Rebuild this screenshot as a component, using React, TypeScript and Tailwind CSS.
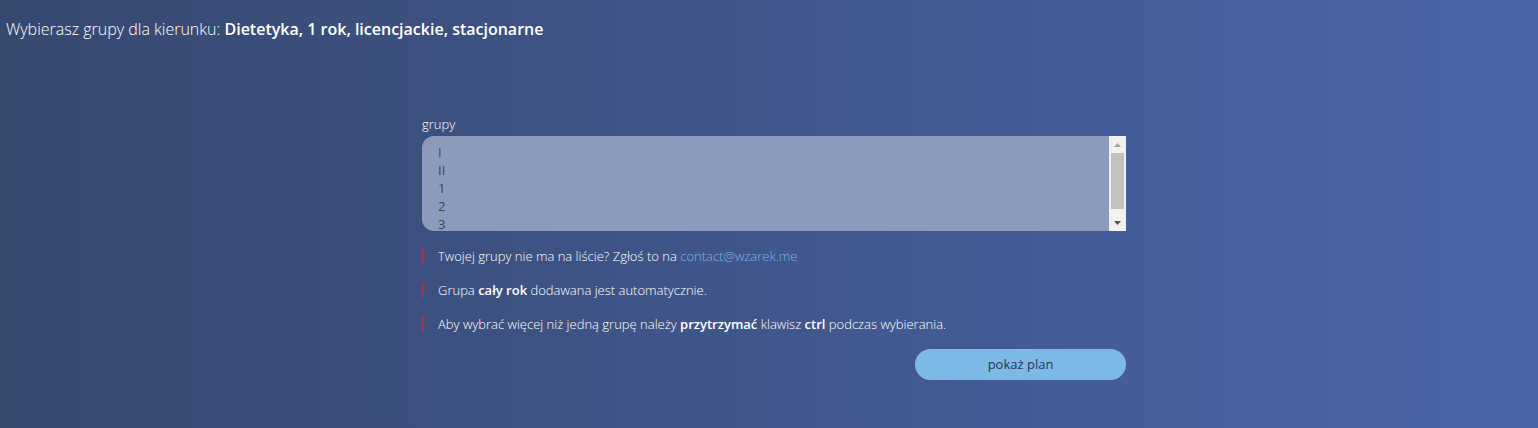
// Wybór grup dla kierunku
const GROUPS = ['I', 'II', '1', '2', '3'];

function Note({ children }: { children: React.ReactNode }) {
  return (
    <div className="flex items-center border-l-2 border-[#a3314f] pl-[14px] leading-4">
      <p>{children}</p>
    </div>
  );
}

export default function App() {
  return (
    <div
      className="min-h-[428px] w-full bg-gradient-to-r from-[#37486f] to-[#4a65aa] text-[13px] font-light text-white"
      style={{ fontFamily: '"Open Sans", "Noto Sans", sans-serif' }}
    >
      {/* nagłówek */}
      <h1 className="pl-[6px] pt-[18px] text-[16px] leading-[22px] font-light">
        Wybierasz grupy dla kierunku: <b className="font-semibold">Dietetyka, 1 rok, licencjackie, stacjonarne</b>
      </h1>

      <div className="mx-auto mt-[76px] w-[714px] pl-[10px]">
        <label className="block leading-4">grupy</label>

        {/* lista grup */}
        <div className="mt-[4px] flex h-[95px] overflow-hidden rounded-l-[12px] bg-[#8c9abb]">
          <ul className="flex-1 overflow-hidden pl-[16px] pt-[7px] leading-[18px] font-normal text-[#3e465c]">
            {GROUPS.map((g) => (
              <li key={g}>{g}</li>
            ))}
          </ul>
          <div className="flex w-[17px] flex-col bg-[#f1f1f1]">
            <div className="flex h-[17px] items-center justify-center">
              <svg width="7" height="4" viewBox="0 0 7 4">
                <path d="M3.5 0L7 4H0z" fill="#a3a3a3" />
              </svg>
            </div>
            <div className="mx-[2px] h-[56px] bg-[#c1c1c1]" />
            <div className="flex-1" />
            <div className="flex h-[17px] items-center justify-center">
              <svg width="7" height="4" viewBox="0 0 7 4">
                <path d="M0 0H7L3.5 4z" fill="#505050" />
              </svg>
            </div>
          </div>
        </div>

        {/* uwagi */}
        <div className="mt-[17px] flex flex-col gap-[18px]">
          <Note>
            Twojej grupy nie ma na liście? Zgłoś to na{' '}
            <a href="#" className="text-[#7fb3e6]">
              contact@wzarek.me
            </a>
          </Note>
          <Note>
            Grupa <b className="font-semibold">cały rok</b> dodawana jest automatycznie.
          </Note>
          <Note>
            Aby wybrać więcej niż jedną grupę należy <b className="font-semibold">przytrzymać</b> klawisz{' '}
            <b className="font-semibold">ctrl</b> podczas wybierania.
          </Note>
        </div>

        <div className="mt-[17px] flex justify-end">
          <button
            type="button"
            className="h-[31px] w-[211px] rounded-full bg-[#7cb9e6] text-[13px] font-normal text-[#2a3756]"
          >
            pokaż plan
          </button>
        </div>
      </div>
    </div>
  );
}
